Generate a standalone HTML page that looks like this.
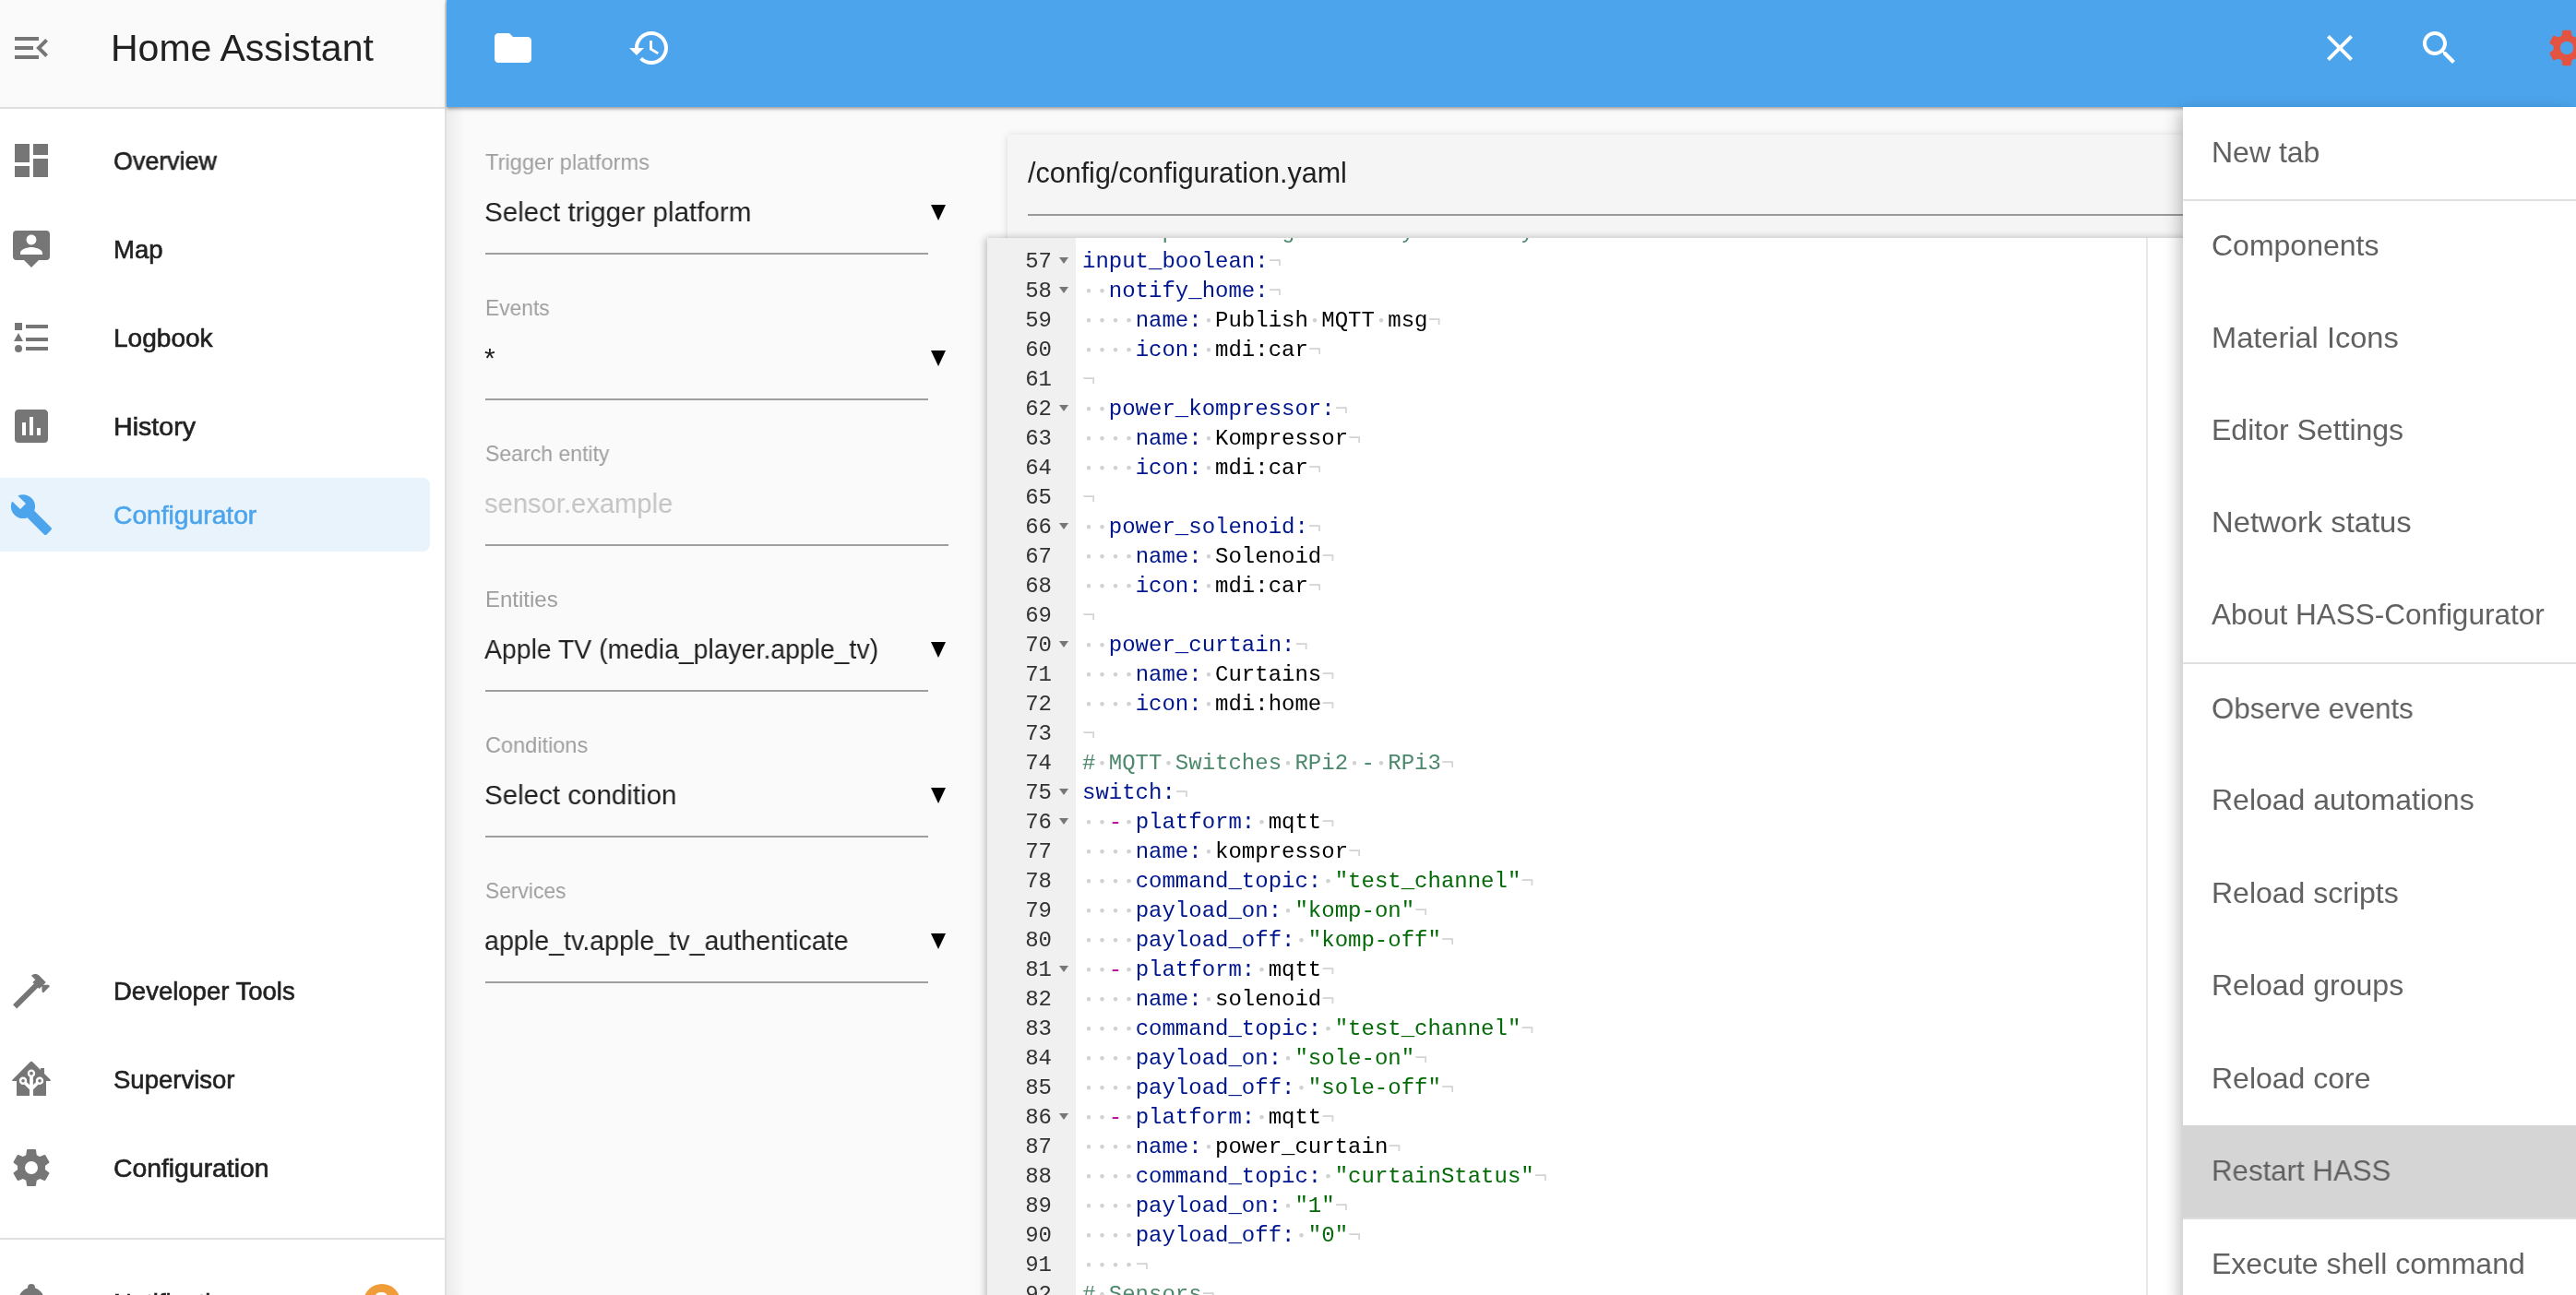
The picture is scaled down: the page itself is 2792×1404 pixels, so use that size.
<!DOCTYPE html>
<html><head><meta charset="utf-8"><title>HASS Configurator</title>
<style>
html,body{margin:0;padding:0;width:2792px;height:1404px;overflow:hidden;background:#fafafa;font-family:"Liberation Sans", sans-serif;}
.t{position:absolute;white-space:pre;line-height:0;will-change:transform;}
.ic{position:absolute;display:block;}
.abs{position:absolute;}
.code{position:absolute;font-family:"Liberation Mono", monospace;font-size:24px;line-height:32px;white-space:pre;color:#000;will-change:transform;}
.d{background:radial-gradient(circle 2.6px at 50% 13.2px, #d2d2d2 0, #d2d2d2 1.9px, rgba(210,210,210,0) 2.6px);}
.k{color:rgb(0,22,142)}
.s{color:rgb(3,106,7)}
.c{color:rgb(76,136,107)}
.l{color:rgb(185,6,144)}
.i{color:rgb(212,212,212)}
.gn{position:absolute;font-family:"Liberation Mono", monospace;font-size:24px;line-height:32px;color:#333;text-align:right;white-space:pre;will-change:transform;}
.fold{position:absolute;width:0;height:0;border-left:5px solid transparent;border-right:5px solid transparent;border-top:7px solid #777;}
</style></head><body>
<div class="abs" style="left:0;top:0;width:482px;height:1404px;background:#fff;"></div>
<div class="abs" style="left:0;top:0;width:482px;height:116px;background:#fafafa;"></div>
<div class="abs" style="left:0;top:116px;width:482px;height:2px;background:#e0e0e0;"></div>
<div class="abs" style="left:482px;top:0;width:2px;height:1404px;background:#e0e0e0;"></div>
<svg class="ic" style="left:10.0px;top:28.0px;width:48px;height:48px" viewBox="0 0 24 24"><path fill="#767676" d="M21,15.61L19.59,17L14.58,12L19.59,7L21,8.39L17.44,12L21,15.61M3,6H16V8H3V6M3,13V11H13V13H3M3,18V16H16V18H3Z"/></svg>
<div class="t" style="left:119.5px;top:51.8px;font-size:41px;color:#212121;font-weight:400;">Home Assistant</div>
<svg class="ic" style="left:10.0px;top:150.0px;width:48px;height:48px" viewBox="0 0 24 24"><path fill="#767676" d="M13,3V9H21V3M13,21H21V11H13M3,21H11V15H3M3,13H11V3H3V13Z"/></svg>
<div class="t" style="left:123px;top:174.5px;font-size:27.5px;color:#212121;font-weight:400;transform:scaleX(0.976);transform-origin:0 0;-webkit-text-stroke:0.6px #212121;">Overview</div>
<svg class="ic" style="left:10.0px;top:246.0px;width:48px;height:48px" viewBox="0 0 24 24"><path fill="#767676" d="M4,2A2,2 0 0,0 2,4V16A2,2 0 0,0 4,18H8L12,22L16,18H20A2,2 0 0,0 22,16V4A2,2 0 0,0 20,2H4M12,4.3C13.5,4.3 14.7,5.5 14.7,7C14.7,8.5 13.5,9.7 12,9.7C10.5,9.7 9.3,8.5 9.3,7C9.3,5.5 10.5,4.3 12,4.3M18,15H6V14.1C6,12.1 10,11 12,11C14,11 18,12.1 18,14.1V15Z"/></svg>
<div class="t" style="left:123px;top:270.5px;font-size:27.5px;color:#212121;font-weight:400;transform:scaleX(1.0);transform-origin:0 0;-webkit-text-stroke:0.6px #212121;">Map</div>
<svg class="ic" style="left:10.0px;top:342.0px;width:48px;height:48px" viewBox="0 0 24 24"><path fill="#767676" d="M5,9.5L7.5,14H2.5L5,9.5M3,4H7V8H3V4M5,20A2,2 0 0,0 7,18A2,2 0 0,0 5,16A2,2 0 0,0 3,18A2,2 0 0,0 5,20M9,5V7H21V5H9M9,19H21V17H9V19M9,14H21V12H9V14Z"/></svg>
<div class="t" style="left:123px;top:366.5px;font-size:27.5px;color:#212121;font-weight:400;transform:scaleX(1.02);transform-origin:0 0;-webkit-text-stroke:0.6px #212121;">Logbook</div>
<svg class="ic" style="left:10.0px;top:438.0px;width:48px;height:48px" viewBox="0 0 24 24"><path fill="#767676" d="M17,17H15V13H17M13,17H11V7H13M9,17H7V10H9M19,3H5C3.89,3 3,3.89 3,5V19A2,2 0 0,0 5,21H19A2,2 0 0,0 21,19V5C21,3.89 20.1,3 19,3Z"/></svg>
<div class="t" style="left:123px;top:462.5px;font-size:27.5px;color:#212121;font-weight:400;transform:scaleX(1.04);transform-origin:0 0;-webkit-text-stroke:0.6px #212121;">History</div>
<div class="abs" style="left:0;top:518px;width:466px;height:80px;background:#e9f3fc;border-radius:0 8px 8px 0;"></div>
<svg class="ic" style="left:10.0px;top:534.0px;width:48px;height:48px" viewBox="0 0 24 24"><path fill="#4ca5ec" d="M22.7,19L13.6,9.9C14.5,7.6 14,4.9 12.1,3C10.1,1 7.1,0.6 4.7,1.7L9,6L6,9L1.6,4.7C0.4,7.1 0.9,10.1 2.9,12.1C4.8,14 7.5,14.5 9.8,13.6L18.9,22.7C19.3,23.1 19.9,23.1 20.3,22.7L22.6,20.4C23.1,20 23.1,19.3 22.7,19Z"/></svg>
<div class="t" style="left:123px;top:558.5px;font-size:27.5px;color:#4ca5ec;font-weight:400;transform:scaleX(1.026);transform-origin:0 0;-webkit-text-stroke:0.6px #4ca5ec;">Configurator</div>
<svg class="ic" style="left:10.0px;top:1050.0px;width:48px;height:48px" viewBox="0 0 24 24"><path fill="#767676" d="M2 19.63L13.43 8.2L12.72 7.5L14.14 6.07L12 3.89C13.2 2.7 15.09 2.7 16.27 3.89L19.87 7.5L18.45 8.91H21.29L22 9.62L18.45 13.21L17.74 12.5V9.62L16.27 11.04L15.56 10.33L4.13 21.76L2 19.63Z"/></svg>
<div class="t" style="left:123px;top:1074.5px;font-size:27.5px;color:#212121;font-weight:400;transform:scaleX(1.0);transform-origin:0 0;-webkit-text-stroke:0.6px #212121;">Developer Tools</div>
<svg class="ic" style="left:10.0px;top:1146.0px;width:48px;height:48px" viewBox="0 0 24 24"><path fill="#767676" d="M21.8,13H20V21H13V17.67L15.79,14.88L16.5,15C17.66,15 18.6,14.06 18.6,12.9C18.6,11.74 17.66,10.8 16.5,10.8A2.1,2.1 0 0,0 14.4,12.9L14.5,13.62L12.94,15.18V10.72C13.6,10.35 14.1,9.65 14.1,8.82C14.1,7.66 13.16,6.72 12,6.72C10.84,6.72 9.9,7.66 9.9,8.82C9.9,9.65 10.4,10.35 11.06,10.72V15.18L9.5,13.62L9.6,12.9A2.1,2.1 0 0,0 7.5,10.8A2.1,2.1 0 0,0 5.4,12.9A2.1,2.1 0 0,0 7.5,15L8.21,14.88L11,17.67V21H4V13H2.25C1.83,13 1.42,13 1.42,12.79C1.43,12.57 1.85,12.15 2.28,11.72L11,3C11.33,2.67 11.67,2.33 12,2.33C12.33,2.33 12.67,2.67 13,3L17,7V6H19V9L21.78,11.78C22.18,12.18 22.59,12.59 22.6,12.8C22.6,13 22.2,13 21.8,13M7.5,12A0.9,0.9 0 0,1 8.4,12.9A0.9,0.9 0 0,1 7.5,13.8A0.9,0.9 0 0,1 6.6,12.9A0.9,0.9 0 0,1 7.5,12M16.5,12C17,12 17.4,12.4 17.4,12.9C17.4,13.4 17,13.8 16.5,13.8A0.9,0.9 0 0,1 15.6,12.9A0.9,0.9 0 0,1 16.5,12M12,7.92C12.5,7.92 12.9,8.32 12.9,8.82C12.9,9.32 12.5,9.72 12,9.72C11.5,9.72 11.1,9.32 11.1,8.82C11.1,8.32 11.5,7.92 12,7.92Z"/></svg>
<div class="t" style="left:123px;top:1170.5px;font-size:27.5px;color:#212121;font-weight:400;transform:scaleX(1.0);transform-origin:0 0;-webkit-text-stroke:0.6px #212121;">Supervisor</div>
<svg class="ic" style="left:10.0px;top:1242.0px;width:48px;height:48px" viewBox="0 0 24 24"><path fill="#767676" d="M12,15.5A3.5,3.5 0 0,1 8.5,12A3.5,3.5 0 0,1 12,8.5A3.5,3.5 0 0,1 15.5,12A3.5,3.5 0 0,1 12,15.5M19.43,12.97C19.47,12.65 19.5,12.33 19.5,12C19.5,11.67 19.47,11.34 19.43,11L21.54,9.37C21.73,9.22 21.78,8.95 21.66,8.73L19.66,5.27C19.54,5.05 19.27,4.96 19.05,5.05L16.56,6.05C16.04,5.66 15.5,5.32 14.87,5.07L14.5,2.42C14.46,2.18 14.25,2 14,2H10C9.75,2 9.54,2.18 9.5,2.42L9.13,5.07C8.5,5.32 7.96,5.66 7.44,6.05L4.95,5.05C4.73,4.96 4.46,5.05 4.34,5.27L2.34,8.73C2.21,8.95 2.27,9.22 2.46,9.37L4.57,11C4.53,11.34 4.5,11.67 4.5,12C4.5,12.33 4.53,12.65 4.57,12.97L2.46,14.63C2.27,14.78 2.21,15.05 2.34,15.27L4.34,18.73C4.46,18.95 4.73,19.03 4.95,18.95L7.44,17.94C7.96,18.34 8.5,18.68 9.13,18.93L9.5,21.58C9.54,21.82 9.75,22 10,22H14C14.25,22 14.46,21.82 14.5,21.58L14.87,18.93C15.5,18.67 16.04,18.34 16.56,17.94L19.05,18.95C19.27,19.03 19.54,18.95 19.66,18.73L21.66,15.27C21.78,15.05 21.73,14.78 21.54,14.63L19.43,12.97Z"/></svg>
<div class="t" style="left:123px;top:1266.5px;font-size:27.5px;color:#212121;font-weight:400;transform:scaleX(1.03);transform-origin:0 0;-webkit-text-stroke:0.6px #212121;">Configuration</div>
<div class="abs" style="left:0;top:1342px;width:482px;height:2px;background:#e0e0e0;"></div>
<svg class="ic" style="left:10.0px;top:1388.0px;width:48px;height:48px" viewBox="0 0 24 24"><path fill="#767676" d="M21,19V20H3V19L5,17V11C5,7.9 7.03,5.17 10,4.29C10,4.19 10,4.1 10,4A2,2 0 0,1 12,2A2,2 0 0,1 14,4C14,4.1 14,4.19 14,4.29C16.97,5.17 19,7.9 19,11V17L21,19M14,21A2,2 0 0,1 12,23A2,2 0 0,1 10,21"/></svg>
<div class="t" style="left:123px;top:1412.5px;font-size:27.5px;color:#212121;font-weight:400;-webkit-text-stroke:0.6px #212121;">Notifications</div>
<div class="abs" style="left:394px;top:1392px;width:40px;height:40px;border-radius:20px;background:#f09c38;"></div>
<div class="t" style="left:405px;top:1410.6px;font-size:30px;color:#fff;font-weight:700;">2</div>
<div class="abs" style="left:484px;top:0;width:2308px;height:116px;background:#4ca5ec;box-shadow:0 2px 3px rgba(0,0,0,0.30), 0 2px 7px rgba(0,0,0,0.10);z-index:2"></div>
<div class="abs" style="left:484px;top:116px;width:20px;height:1288px;background:linear-gradient(to right, rgba(0,0,0,0.06), rgba(0,0,0,0));"></div>
<div class="abs" style="left:0;top:0;width:2792px;height:116px;z-index:3"><svg class="ic" style="left:532.0px;top:28.0px;width:48px;height:48px" viewBox="0 0 24 24"><path fill="#fff" d="M10 4H4c-1.1 0-1.99.9-1.99 2L2 18c0 1.1.9 2 2 2h16c1.1 0 2-.9 2-2V8c0-1.1-.9-2-2-2h-8l-2-2z"/></svg>
<svg class="ic" style="left:680.0px;top:28.0px;width:48px;height:48px" viewBox="0 0 24 24"><path fill="#fff" d="M13 3c-4.97 0-9 4.03-9 9H1l3.89 3.89.07.14L9 12H6c0-3.87 3.13-7 7-7s7 3.13 7 7-3.13 7-7 7c-1.93 0-3.68-.79-4.94-2.06l-1.42 1.42C8.27 19.99 10.51 21 13 21c4.97 0 9-4.03 9-9s-4.03-9-9-9zm-1 5v5l4.28 2.54.72-1.21-3.5-2.08V8H12z"/></svg>
<svg class="ic" style="left:2511.5px;top:28.0px;width:48px;height:48px" viewBox="0 0 24 24"><path fill="#fff" d="M19 6.41L17.59 5 12 10.59 6.41 5 5 6.41 10.59 12 5 17.59 6.41 19 12 13.41 17.59 19 19 17.59 13.41 12z"/></svg>
<svg class="ic" style="left:2620.0px;top:28.0px;width:48px;height:48px" viewBox="0 0 24 24"><path fill="#fff" d="M15.5 14h-.79l-.28-.27C15.41 12.59 16 11.11 16 9.5 16 5.91 13.09 3 9.5 3S3 5.91 3 9.5 5.91 16 9.5 16c1.61 0 3.09-.59 4.23-1.57l.27.28v.79l5 4.99L20.49 19l-4.99-5zm-6 0C7.01 14 5 11.99 5 9.5S7.01 5 9.5 5 14 7.01 14 9.5 11.99 14 9.5 14z"/></svg>
<svg class="ic" style="left:2758.0px;top:28.0px;width:48px;height:48px" viewBox="0 0 24 24"><path fill="#e4533f" d="M19.14 12.94c.04-.3.06-.61.06-.94 0-.32-.02-.64-.07-.94l2.03-1.58c.18-.14.23-.41.12-.61l-1.92-3.32c-.12-.22-.37-.29-.59-.22l-2.39.96c-.5-.38-1.03-.7-1.62-.94l-.36-2.54c-.04-.24-.24-.41-.48-.41h-3.84c-.24 0-.43.17-.47.41l-.36 2.54c-.59.24-1.13.57-1.62.94l-2.39-.96c-.22-.08-.47 0-.59.22L2.74 8.87c-.12.21-.08.47.12.61l2.03 1.58c-.05.3-.09.63-.09.94s.02.64.07.94l-2.03 1.58c-.18.14-.23.41-.12.61l1.92 3.32c.12.22.37.29.59.22l2.39-.96c.5.38 1.03.7 1.62.94l.36 2.54c.05.24.24.41.48.41h3.84c.24 0 .44-.17.47-.41l.36-2.54c.59-.24 1.13-.56 1.62-.94l2.39.96c.22.08.47 0 .59-.22l1.92-3.32c.12-.22.07-.47-.12-.61l-2.01-1.58zM12 15.6c-1.98 0-3.6-1.62-3.6-3.6s1.62-3.6 3.6-3.6 3.6 1.62 3.6 3.6-1.62 3.6-3.6 3.6z"/></svg>
</div>
<div class="t" style="left:526px;top:175.7px;font-size:24px;color:#9e9e9e;font-weight:400;transform:scaleX(0.986);transform-origin:0 0;">Trigger platforms</div>
<div class="t" style="left:525px;top:229.6px;font-size:30px;color:#212121;font-weight:400;transform:scaleX(0.986);transform-origin:0 0;">Select trigger platform</div>
<div class="abs" style="left:1009px;top:222px;width:0;height:0;border-left:8.5px solid transparent;border-right:8.5px solid transparent;border-top:17px solid #000;"></div>
<div class="abs" style="left:526px;top:274px;width:480px;height:2px;background:#9e9e9e;"></div>
<div class="t" style="left:526px;top:333.7px;font-size:24px;color:#9e9e9e;font-weight:400;transform:scaleX(0.95);transform-origin:0 0;">Events</div>
<div class="t" style="left:525px;top:387.6px;font-size:30px;color:#212121;font-weight:400;transform:scaleX(1.0);transform-origin:0 0;">*</div>
<div class="abs" style="left:1009px;top:380px;width:0;height:0;border-left:8.5px solid transparent;border-right:8.5px solid transparent;border-top:17px solid #000;"></div>
<div class="abs" style="left:526px;top:432px;width:480px;height:2px;background:#9e9e9e;"></div>
<div class="t" style="left:526px;top:491.7px;font-size:24px;color:#9e9e9e;font-weight:400;transform:scaleX(0.96);transform-origin:0 0;">Search entity</div>
<div class="t" style="left:525px;top:545.6px;font-size:30px;color:#c4c4c4;font-weight:400;transform:scaleX(0.972);transform-origin:0 0;">sensor.example</div>
<div class="abs" style="left:526px;top:590px;width:502px;height:2px;background:#9e9e9e;"></div>
<div class="t" style="left:526px;top:649.7px;font-size:24px;color:#9e9e9e;font-weight:400;transform:scaleX(1.0);transform-origin:0 0;">Entities</div>
<div class="t" style="left:525px;top:703.6px;font-size:30px;color:#212121;font-weight:400;transform:scaleX(0.946);transform-origin:0 0;">Apple TV (media_player.apple_tv)</div>
<div class="abs" style="left:1009px;top:696px;width:0;height:0;border-left:8.5px solid transparent;border-right:8.5px solid transparent;border-top:17px solid #000;"></div>
<div class="abs" style="left:526px;top:748px;width:480px;height:2px;background:#9e9e9e;"></div>
<div class="t" style="left:526px;top:807.7px;font-size:24px;color:#9e9e9e;font-weight:400;transform:scaleX(0.98);transform-origin:0 0;">Conditions</div>
<div class="t" style="left:525px;top:861.6px;font-size:30px;color:#212121;font-weight:400;transform:scaleX(0.984);transform-origin:0 0;">Select condition</div>
<div class="abs" style="left:1009px;top:854px;width:0;height:0;border-left:8.5px solid transparent;border-right:8.5px solid transparent;border-top:17px solid #000;"></div>
<div class="abs" style="left:526px;top:906px;width:480px;height:2px;background:#9e9e9e;"></div>
<div class="t" style="left:526px;top:965.7px;font-size:24px;color:#9e9e9e;font-weight:400;transform:scaleX(0.95);transform-origin:0 0;">Services</div>
<div class="t" style="left:525px;top:1019.6px;font-size:30px;color:#212121;font-weight:400;transform:scaleX(0.955);transform-origin:0 0;">apple_tv.apple_tv_authenticate</div>
<div class="abs" style="left:1009px;top:1012px;width:0;height:0;border-left:8.5px solid transparent;border-right:8.5px solid transparent;border-top:17px solid #000;"></div>
<div class="abs" style="left:526px;top:1064px;width:480px;height:2px;background:#9e9e9e;"></div>
<div class="abs" style="left:1092px;top:146px;width:1800px;height:1300px;background:#f5f5f5;box-shadow:0 1px 8px rgba(0,0,0,0.14);"></div>
<div class="t" style="left:1114px;top:186.9px;font-size:30.5px;color:#212121;font-weight:400;">/config/configuration.yaml</div>
<div class="abs" style="left:1114px;top:232px;width:1700px;height:2px;background:#9a9a9a;"></div>
<div class="abs" style="left:1070px;top:258px;width:1800px;height:1200px;background:#fff;box-shadow:-2px 0 8px rgba(0,0,0,0.25);overflow:hidden">
<div class="abs" style="left:0;top:0;width:96px;height:1200px;background:#f0f0f0;"></div>
<div class="abs" style="left:1256px;top:0;width:2px;height:1200px;background:#e8e8e8;"></div>
<div class="gn" style="left:0;top:-22.4px;width:70px">56</div>
<div class="code" style="left:103.3px;top:-22.4px"><span class="c">#</span><span class="d"> </span><span class="c">Example</span><span class="d"> </span><span class="c">configuration.yaml</span><span class="d"> </span><span class="c">entry</span><span class="i">¬</span></div>
<div class="gn" style="left:0;top:9.6px;width:70px">57</div>
<div class="fold" style="left:78px;top:21px"></div>
<div class="code" style="left:103.3px;top:9.6px"><span class="k">input_boolean:</span><span class="i">¬</span></div>
<div class="gn" style="left:0;top:41.6px;width:70px">58</div>
<div class="fold" style="left:78px;top:53px"></div>
<div class="code" style="left:103.3px;top:41.6px"><span class="d"> </span><span class="d"> </span><span class="k">notify_home:</span><span class="i">¬</span></div>
<div class="gn" style="left:0;top:73.6px;width:70px">59</div>
<div class="code" style="left:103.3px;top:73.6px"><span class="d"> </span><span class="d"> </span><span class="d"> </span><span class="d"> </span><span class="k">name:</span><span class="d"> </span>Publish<span class="d"> </span>MQTT<span class="d"> </span>msg<span class="i">¬</span></div>
<div class="gn" style="left:0;top:105.6px;width:70px">60</div>
<div class="code" style="left:103.3px;top:105.6px"><span class="d"> </span><span class="d"> </span><span class="d"> </span><span class="d"> </span><span class="k">icon:</span><span class="d"> </span>mdi:car<span class="i">¬</span></div>
<div class="gn" style="left:0;top:137.6px;width:70px">61</div>
<div class="code" style="left:103.3px;top:137.6px"><span class="i">¬</span></div>
<div class="gn" style="left:0;top:169.6px;width:70px">62</div>
<div class="fold" style="left:78px;top:181px"></div>
<div class="code" style="left:103.3px;top:169.6px"><span class="d"> </span><span class="d"> </span><span class="k">power_kompressor:</span><span class="i">¬</span></div>
<div class="gn" style="left:0;top:201.6px;width:70px">63</div>
<div class="code" style="left:103.3px;top:201.6px"><span class="d"> </span><span class="d"> </span><span class="d"> </span><span class="d"> </span><span class="k">name:</span><span class="d"> </span>Kompressor<span class="i">¬</span></div>
<div class="gn" style="left:0;top:233.6px;width:70px">64</div>
<div class="code" style="left:103.3px;top:233.6px"><span class="d"> </span><span class="d"> </span><span class="d"> </span><span class="d"> </span><span class="k">icon:</span><span class="d"> </span>mdi:car<span class="i">¬</span></div>
<div class="gn" style="left:0;top:265.6px;width:70px">65</div>
<div class="code" style="left:103.3px;top:265.6px"><span class="i">¬</span></div>
<div class="gn" style="left:0;top:297.6px;width:70px">66</div>
<div class="fold" style="left:78px;top:309px"></div>
<div class="code" style="left:103.3px;top:297.6px"><span class="d"> </span><span class="d"> </span><span class="k">power_solenoid:</span><span class="i">¬</span></div>
<div class="gn" style="left:0;top:329.6px;width:70px">67</div>
<div class="code" style="left:103.3px;top:329.6px"><span class="d"> </span><span class="d"> </span><span class="d"> </span><span class="d"> </span><span class="k">name:</span><span class="d"> </span>Solenoid<span class="i">¬</span></div>
<div class="gn" style="left:0;top:361.6px;width:70px">68</div>
<div class="code" style="left:103.3px;top:361.6px"><span class="d"> </span><span class="d"> </span><span class="d"> </span><span class="d"> </span><span class="k">icon:</span><span class="d"> </span>mdi:car<span class="i">¬</span></div>
<div class="gn" style="left:0;top:393.6px;width:70px">69</div>
<div class="code" style="left:103.3px;top:393.6px"><span class="i">¬</span></div>
<div class="gn" style="left:0;top:425.6px;width:70px">70</div>
<div class="fold" style="left:78px;top:437px"></div>
<div class="code" style="left:103.3px;top:425.6px"><span class="d"> </span><span class="d"> </span><span class="k">power_curtain:</span><span class="i">¬</span></div>
<div class="gn" style="left:0;top:457.6px;width:70px">71</div>
<div class="code" style="left:103.3px;top:457.6px"><span class="d"> </span><span class="d"> </span><span class="d"> </span><span class="d"> </span><span class="k">name:</span><span class="d"> </span>Curtains<span class="i">¬</span></div>
<div class="gn" style="left:0;top:489.6px;width:70px">72</div>
<div class="code" style="left:103.3px;top:489.6px"><span class="d"> </span><span class="d"> </span><span class="d"> </span><span class="d"> </span><span class="k">icon:</span><span class="d"> </span>mdi:home<span class="i">¬</span></div>
<div class="gn" style="left:0;top:521.6px;width:70px">73</div>
<div class="code" style="left:103.3px;top:521.6px"><span class="i">¬</span></div>
<div class="gn" style="left:0;top:553.6px;width:70px">74</div>
<div class="code" style="left:103.3px;top:553.6px"><span class="c">#</span><span class="d"> </span><span class="c">MQTT</span><span class="d"> </span><span class="c">Switches</span><span class="d"> </span><span class="c">RPi2</span><span class="d"> </span><span class="c">-</span><span class="d"> </span><span class="c">RPi3</span><span class="i">¬</span></div>
<div class="gn" style="left:0;top:585.6px;width:70px">75</div>
<div class="fold" style="left:78px;top:597px"></div>
<div class="code" style="left:103.3px;top:585.6px"><span class="k">switch:</span><span class="i">¬</span></div>
<div class="gn" style="left:0;top:617.6px;width:70px">76</div>
<div class="fold" style="left:78px;top:629px"></div>
<div class="code" style="left:103.3px;top:617.6px"><span class="d"> </span><span class="d"> </span><span class="l">-</span><span class="d"> </span><span class="k">platform:</span><span class="d"> </span>mqtt<span class="i">¬</span></div>
<div class="gn" style="left:0;top:649.6px;width:70px">77</div>
<div class="code" style="left:103.3px;top:649.6px"><span class="d"> </span><span class="d"> </span><span class="d"> </span><span class="d"> </span><span class="k">name:</span><span class="d"> </span>kompressor<span class="i">¬</span></div>
<div class="gn" style="left:0;top:681.6px;width:70px">78</div>
<div class="code" style="left:103.3px;top:681.6px"><span class="d"> </span><span class="d"> </span><span class="d"> </span><span class="d"> </span><span class="k">command_topic:</span><span class="d"> </span><span class="s">"test_channel"</span><span class="i">¬</span></div>
<div class="gn" style="left:0;top:713.6px;width:70px">79</div>
<div class="code" style="left:103.3px;top:713.6px"><span class="d"> </span><span class="d"> </span><span class="d"> </span><span class="d"> </span><span class="k">payload_on:</span><span class="d"> </span><span class="s">"komp-on"</span><span class="i">¬</span></div>
<div class="gn" style="left:0;top:745.6px;width:70px">80</div>
<div class="code" style="left:103.3px;top:745.6px"><span class="d"> </span><span class="d"> </span><span class="d"> </span><span class="d"> </span><span class="k">payload_off:</span><span class="d"> </span><span class="s">"komp-off"</span><span class="i">¬</span></div>
<div class="gn" style="left:0;top:777.6px;width:70px">81</div>
<div class="fold" style="left:78px;top:789px"></div>
<div class="code" style="left:103.3px;top:777.6px"><span class="d"> </span><span class="d"> </span><span class="l">-</span><span class="d"> </span><span class="k">platform:</span><span class="d"> </span>mqtt<span class="i">¬</span></div>
<div class="gn" style="left:0;top:809.6px;width:70px">82</div>
<div class="code" style="left:103.3px;top:809.6px"><span class="d"> </span><span class="d"> </span><span class="d"> </span><span class="d"> </span><span class="k">name:</span><span class="d"> </span>solenoid<span class="i">¬</span></div>
<div class="gn" style="left:0;top:841.6px;width:70px">83</div>
<div class="code" style="left:103.3px;top:841.6px"><span class="d"> </span><span class="d"> </span><span class="d"> </span><span class="d"> </span><span class="k">command_topic:</span><span class="d"> </span><span class="s">"test_channel"</span><span class="i">¬</span></div>
<div class="gn" style="left:0;top:873.6px;width:70px">84</div>
<div class="code" style="left:103.3px;top:873.6px"><span class="d"> </span><span class="d"> </span><span class="d"> </span><span class="d"> </span><span class="k">payload_on:</span><span class="d"> </span><span class="s">"sole-on"</span><span class="i">¬</span></div>
<div class="gn" style="left:0;top:905.6px;width:70px">85</div>
<div class="code" style="left:103.3px;top:905.6px"><span class="d"> </span><span class="d"> </span><span class="d"> </span><span class="d"> </span><span class="k">payload_off:</span><span class="d"> </span><span class="s">"sole-off"</span><span class="i">¬</span></div>
<div class="gn" style="left:0;top:937.6px;width:70px">86</div>
<div class="fold" style="left:78px;top:949px"></div>
<div class="code" style="left:103.3px;top:937.6px"><span class="d"> </span><span class="d"> </span><span class="l">-</span><span class="d"> </span><span class="k">platform:</span><span class="d"> </span>mqtt<span class="i">¬</span></div>
<div class="gn" style="left:0;top:969.6px;width:70px">87</div>
<div class="code" style="left:103.3px;top:969.6px"><span class="d"> </span><span class="d"> </span><span class="d"> </span><span class="d"> </span><span class="k">name:</span><span class="d"> </span>power_curtain<span class="i">¬</span></div>
<div class="gn" style="left:0;top:1001.6px;width:70px">88</div>
<div class="code" style="left:103.3px;top:1001.6px"><span class="d"> </span><span class="d"> </span><span class="d"> </span><span class="d"> </span><span class="k">command_topic:</span><span class="d"> </span><span class="s">"curtainStatus"</span><span class="i">¬</span></div>
<div class="gn" style="left:0;top:1033.6px;width:70px">89</div>
<div class="code" style="left:103.3px;top:1033.6px"><span class="d"> </span><span class="d"> </span><span class="d"> </span><span class="d"> </span><span class="k">payload_on:</span><span class="d"> </span><span class="s">"1"</span><span class="i">¬</span></div>
<div class="gn" style="left:0;top:1065.6px;width:70px">90</div>
<div class="code" style="left:103.3px;top:1065.6px"><span class="d"> </span><span class="d"> </span><span class="d"> </span><span class="d"> </span><span class="k">payload_off:</span><span class="d"> </span><span class="s">"0"</span><span class="i">¬</span></div>
<div class="gn" style="left:0;top:1097.6px;width:70px">91</div>
<div class="code" style="left:103.3px;top:1097.6px"><span class="d"> </span><span class="d"> </span><span class="d"> </span><span class="d"> </span><span class="i">¬</span></div>
<div class="gn" style="left:0;top:1129.6px;width:70px">92</div>
<div class="code" style="left:103.3px;top:1129.6px"><span class="c">#</span><span class="d"> </span><span class="c">Sensors</span><span class="i">¬</span></div>
<div class="gn" style="left:0;top:1161.6px;width:70px">93</div>
<div class="fold" style="left:78px;top:1173px"></div>
<div class="code" style="left:103.3px;top:1161.6px"><span class="k">sensor:</span><span class="i">¬</span></div>
</div>
<div class="abs" style="left:2366px;top:116px;width:426px;height:1300px;background:#fff;box-shadow:-4px 4px 16px rgba(0,0,0,0.25);z-index:4">
<div class="abs" style="left:0;top:100px;width:426px;height:2px;background:#e0e0e0;"></div>
<div class="abs" style="left:0;top:602px;width:426px;height:2px;background:#e0e0e0;"></div>
<div class="abs" style="left:0;top:1104px;width:426px;height:100px;background:#d5d5d5;"></div>
<div class="abs" style="left:0;top:1204px;width:426px;height:2px;background:#dedede;"></div>
<div class="t" style="left:31px;top:48.5px;font-size:32px;color:#616161;font-weight:400;">New tab</div>
<div class="t" style="left:31px;top:149.9px;font-size:32px;color:#616161;font-weight:400;">Components</div>
<div class="t" style="left:31px;top:249.5px;font-size:32px;color:#616161;font-weight:400;transform:scaleX(1.018);transform-origin:0 0;">Material Icons</div>
<div class="t" style="left:31px;top:349.9px;font-size:32px;color:#616161;font-weight:400;">Editor Settings</div>
<div class="t" style="left:31px;top:449.5px;font-size:32px;color:#616161;font-weight:400;transform:scaleX(1.024);transform-origin:0 0;">Network status</div>
<div class="t" style="left:31px;top:549.7px;font-size:31.5px;color:#616161;font-weight:400;">About HASS-Configurator</div>
<div class="t" style="left:31px;top:652.4px;font-size:32px;color:#616161;font-weight:400;transform:scaleX(0.976);transform-origin:0 0;">Observe events</div>
<div class="t" style="left:31px;top:750.9px;font-size:32px;color:#616161;font-weight:400;">Reload automations</div>
<div class="t" style="left:31px;top:851.9px;font-size:32px;color:#616161;font-weight:400;">Reload scripts</div>
<div class="t" style="left:31px;top:952.4px;font-size:32px;color:#616161;font-weight:400;">Reload groups</div>
<div class="t" style="left:31px;top:1052.9px;font-size:32px;color:#616161;font-weight:400;">Reload core</div>
<div class="t" style="left:31px;top:1152.5px;font-size:32px;color:#616161;font-weight:400;transform:scaleX(0.976);transform-origin:0 0;">Restart HASS</div>
<div class="t" style="left:31px;top:1253.9px;font-size:32px;color:#616161;font-weight:400;">Execute shell command</div>
</div>
</body></html>
